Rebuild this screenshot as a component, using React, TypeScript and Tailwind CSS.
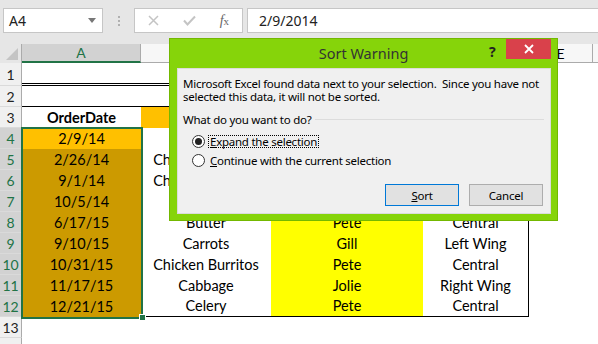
import React from "react";

const rowsData: { n: number; a: string; b: string; c: string; d: string }[] = [
  { n: 4, a: "2/9/14", b: "Carrots", c: "Gill", d: "Left Wing" },
  { n: 5, a: "2/26/14", b: "Chicken Burritos", c: "Pete", d: "Central" },
  { n: 6, a: "9/1/14", b: "Chicken Burritos", c: "Jolie", d: "Right Wing" },
  { n: 7, a: "10/5/14", b: "Celery", c: "Gill", d: "Left Wing" },
  { n: 8, a: "6/17/15", b: "Butter", c: "Pete", d: "Central" },
  { n: 9, a: "9/10/15", b: "Carrots", c: "Gill", d: "Left Wing" },
  { n: 10, a: "10/31/15", b: "Chicken Burritos", c: "Pete", d: "Central" },
  { n: 11, a: "11/17/15", b: "Cabbage", c: "Jolie", d: "Right Wing" },
  { n: 12, a: "12/21/15", b: "Celery", c: "Pete", d: "Central" },
];

function RowHead({ n, sel, h }: { n?: number; sel?: boolean; h: string }) {
  return (
    <div
      className={`w-[22px] shrink-0 ${h} flex items-center justify-center border-r border-b border-r-[#ababab] border-b-[#dadada] text-[14px] ${
        sel ? "bg-[#d2d2d2] text-[#217346]" : "bg-[#f0f0f0] text-[#222]"
      }`}
    >
      {n}
    </div>
  );
}

export default function App() {
  return (
    <div
      className="relative w-[598px] h-[344px] overflow-hidden bg-white text-black"
      style={{ fontFamily: "Lato, sans-serif" }}
    >
      {/* Top formula bar */}
      <div
        className="h-[44px] bg-[#e6e6e6] flex items-start pt-[8px] pl-[3px]"
        style={{ fontFamily: "'Noto Sans', sans-serif" }}
      >
        <div className="w-[100px] h-[25px] bg-white border border-[#c6c6c6] flex items-center justify-between pl-[5px] pr-[6px] text-[14px] text-[#222]">
          <span>A4</span>
          <svg width="8" height="5" viewBox="0 0 8 5">
            <path d="M0 0 L8 0 L4 5 Z" fill="#777" />
          </svg>
        </div>
        <div className="w-[31px] h-[25px] flex flex-col items-center justify-center gap-[2px]">
          <span className="w-[2px] h-[2px] bg-[#b0b0b0]" />
          <span className="w-[2px] h-[2px] bg-[#b0b0b0]" />
          <span className="w-[2px] h-[2px] bg-[#b0b0b0]" />
        </div>
        <div className="w-[109px] h-[25px] bg-white border border-[#c6c6c6] flex items-center">
          <div className="w-[37px] flex justify-center">
            <svg width="11" height="11" viewBox="0 0 11 11">
              <path d="M1 1 L10 10 M10 1 L1 10" stroke="#c4c4c4" strokeWidth="1.5" />
            </svg>
          </div>
          <div className="w-[36px] flex justify-center">
            <svg width="13" height="11" viewBox="0 0 13 11">
              <path d="M1 5.5 L4.5 9.5 L12 1.5" stroke="#c4c4c4" strokeWidth="2" fill="none" />
            </svg>
          </div>
          <div
            className="w-[36px] flex justify-center text-[14px] italic text-[#666]"
            style={{ fontFamily: "'Liberation Serif', serif" }}
          >
            f<span className="text-[11px] not-italic mt-[3px]">x</span>
          </div>
        </div>
        <div className="ml-[4px] flex-1 h-[25px] bg-white border border-[#c6c6c6] border-r-0 flex items-center pl-[11px] text-[14px] text-[#222]">
          2/9/2014
        </div>
      </div>

      {/* Column headers */}
      <div className="flex h-[19px] text-[14px]">
        <div className="w-[22px] shrink-0 bg-[#e6e6e6] border-r border-[#ababab] relative flex items-end justify-end pr-[3px] pb-[3px]">
          <svg width="12" height="12" viewBox="0 0 12 12">
            <path d="M12 0 L12 12 L0 12 Z" fill="#c4c4c4" />
          </svg>
        </div>
        <div className="w-[119px] shrink-0 bg-[#d2d2d2] border-b-2 border-[#217346] border-r border-r-[#ababab] flex items-center justify-center text-[#217346]">
          A
        </div>
        <div className="w-[130px] shrink-0 bg-[#f7f7f7] border-b border-r border-[#ababab] flex items-center justify-center">B</div>
        <div className="w-[152px] shrink-0 bg-[#f7f7f7] border-b border-r border-[#ababab] flex items-center justify-center">C</div>
        <div className="w-[106px] shrink-0 bg-[#f7f7f7] border-b border-r border-[#ababab] flex items-center justify-center">D</div>
        <div className="w-[64px] shrink-0 bg-[#f7f7f7] border-b border-r border-[#ababab] flex items-center justify-center">E</div>
        <div className="flex-1 bg-[#f7f7f7] border-b border-[#ababab]" />
      </div>

      {/* Row 1 */}
      <div className="flex h-[23px]">
        <RowHead n={1} h="h-[23px]" />
        <div className="w-[507px] shrink-0 border-b-[3px] border-double border-black" />
      </div>
      {/* Row 2 */}
      <div className="flex h-[21px]">
        <RowHead n={2} h="h-[21px]" />
        <div className="w-[507px] shrink-0 border-b border-black" />
      </div>
      {/* Row 3 */}
      <div className="flex h-[21px] text-[14.5px]">
        <RowHead n={3} h="h-[21px]" />
        <div className="w-[119px] shrink-0 flex items-center justify-center font-bold">OrderDate</div>
        <div className="w-[130px] shrink-0 bg-[#ffc000] flex items-center justify-center font-bold">Product</div>
        <div className="w-[152px] shrink-0 bg-[#ffc000] flex items-center justify-center font-bold">Salesperson</div>
        <div className="w-[106px] shrink-0 bg-[#ffc000] flex items-center justify-center font-bold border-r border-black">Region</div>
      </div>
      {rowsData.map((r) => (
        <div key={r.n} className="flex h-[21px] text-[14.5px]">
          <RowHead n={r.n} sel h="h-[21px]" />
          <div
            className={`w-[119px] shrink-0 flex items-center justify-center ${
              r.n === 4 ? "bg-[#ffc000]" : "bg-[#cc9a00]"
            }`}
          >
            {r.a}
          </div>
          <div className={`w-[130px] shrink-0 flex items-center justify-center ${r.n === 12 ? "border-b border-black" : ""}`}>{r.b}</div>
          <div className={`w-[152px] shrink-0 bg-[#ffff00] flex items-center justify-center ${r.n === 12 ? "border-b border-black" : ""}`}>{r.c}</div>
          <div className={`w-[106px] shrink-0 flex items-center justify-center border-r border-black ${r.n === 12 ? "border-b" : ""}`}>{r.d}</div>
        </div>
      ))}
      <div className="flex h-[21px]">
        <RowHead n={13} h="h-[21px]" />
      </div>
      <div className="flex h-[21px]">
        <RowHead h="h-[21px]" />
      </div>

      {/* Selection box */}
      <div className="absolute left-[21px] top-[127px] w-[122px] h-[192px] border-2 border-[#217346] pointer-events-none" />
      <div className="absolute left-[139px] top-[314px] w-[7px] h-[7px] bg-[#217346] border border-white" />

      {/* Dialog */}
      <div
        className="absolute left-[169px] top-[38px] w-[389px] h-[183px] bg-[#86d40a] border border-[#73b800]"
        style={{ fontFamily: "'Noto Sans', sans-serif" }}
      >
        <div className="h-[29px] relative flex items-center justify-center text-[14.5px] text-[#333]">
          Sort Warning
          <div className="absolute left-[319px] top-[2px] text-[14px] font-bold text-[#222]">?</div>
          <div className="absolute left-[336px] top-0 w-[45px] h-[20px] bg-[#d9414b] flex items-center justify-center">
            <svg width="10" height="10" viewBox="0 0 10 10">
              <path d="M1 1 L9 9 M9 1 L1 9" stroke="#fff" strokeWidth="1.8" />
            </svg>
          </div>
        </div>
        <div className="ml-[7px] w-[374px] h-[146px] bg-[#f0f0f0] border border-[#dcdcdc] text-[11.5px] tracking-[-0.25px] leading-[13px] text-black px-[5px] pt-[8px]">
          <div className="whitespace-pre">Microsoft Excel found data next to your selection.  Since you have not</div>
          <div>selected this data, it will not be sorted.</div>
          <div className="mt-[10px] flex items-center">
            <span>What do you want to do?</span>
            <span className="flex-1 h-px bg-[#dcdcdc] ml-[4px] mr-[1px]" />
          </div>
          <div className="mt-[8px] ml-[9px] flex items-center h-[14px]">
            <span className="w-[13px] h-[13px] rounded-full border border-[#333] bg-white flex items-center justify-center">
              <span className="w-[7px] h-[7px] rounded-full bg-[#222]" />
            </span>
            <span className="ml-[3px] px-[1px] border border-dotted border-black leading-[11px]">
              <u>E</u>xpand the selection
            </span>
          </div>
          <div className="mt-[5px] ml-[9px] flex items-center h-[14px]">
            <span className="w-[13px] h-[13px] rounded-full border border-[#333] bg-white" />
            <span className="ml-[4px] px-[1px]">
              <u>C</u>ontinue with the current selection
            </span>
          </div>
          <div className="mt-[17px] flex justify-end gap-[10px] pr-[2px]">
            <div className="w-[74px] h-[22px] bg-[#e1e1e1] border border-[#0078d7] flex items-center justify-center">
              <span><u>S</u>ort</span>
            </div>
            <div className="w-[74px] h-[22px] bg-[#e1e1e1] border border-[#adadad] flex items-center justify-center">
              Cancel
            </div>
          </div>
        </div>
      </div>
    </div>
  );
}
